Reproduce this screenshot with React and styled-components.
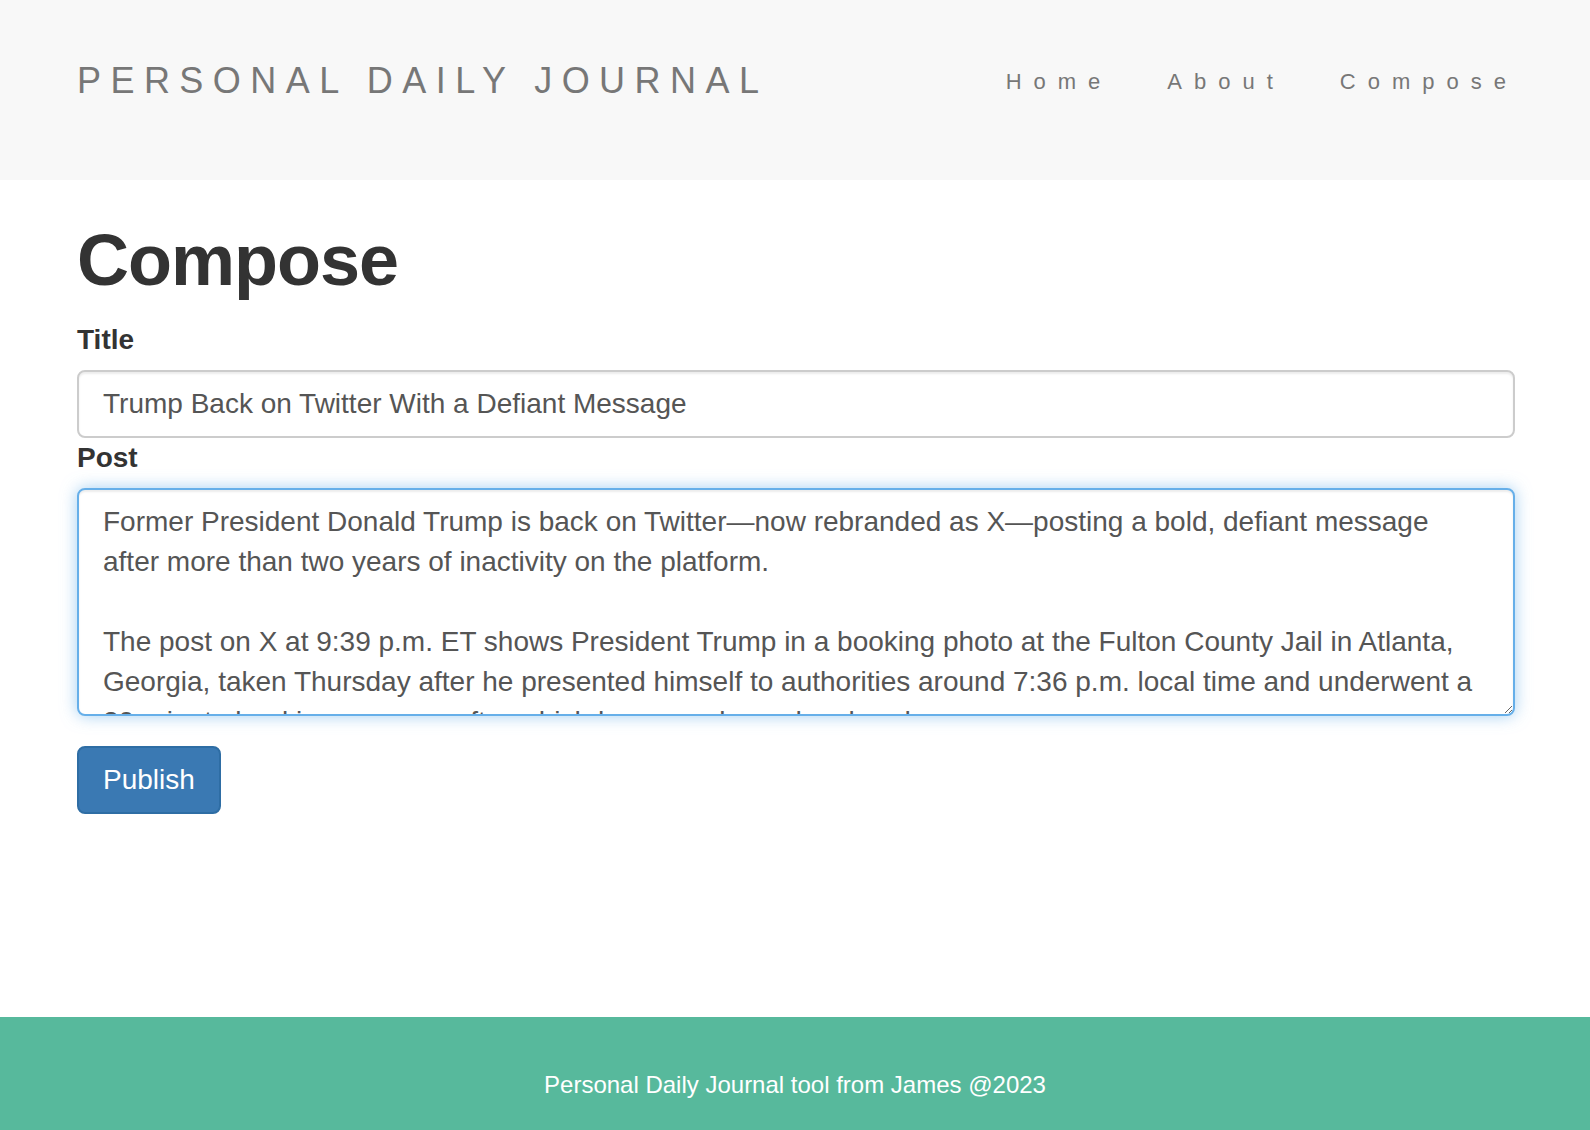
import React from 'react'
import styled, { createGlobalStyle } from 'styled-components'

const GlobalStyle = createGlobalStyle`
  html, body {
    margin: 0;
    padding: 0;
    background: #fff;
  }
  body {
    font-family: "Liberation Sans", Arial, Helvetica, sans-serif;
    color: #333;
  }
  * { box-sizing: border-box; }
`

const POST_TEXT = `Former President Donald Trump is back on Twitter\u2014now rebranded as X\u2014posting a bold, defiant message after more than two years of inactivity on the platform.

The post on X at 9:39 p.m. ET shows President Trump in a booking photo at the Fulton County Jail in Atlanta, Georgia, taken Thursday after he presented himself to authorities around 7:36 p.m. local time and underwent a 20-minute booking process, after which he was released on bond.`

const App = () => {
  return (
    <>
      <GlobalStyle />
      <Page>
        <Navbar>
          <Brand href="#">Personal Daily Journal</Brand>
          <NavList>
            <li><NavLink href="#">Home</NavLink></li>
            <li><NavLink href="#">About</NavLink></li>
            <li><NavLink href="#">Compose</NavLink></li>
          </NavList>
        </Navbar>

        <Main>
          <Heading>Compose</Heading>
          <form onSubmit={e => e.preventDefault()}>
            <Label htmlFor="postTitle">Title</Label>
            <TextInput id="postTitle" type="text" defaultValue="Trump Back on Twitter With a Defiant Message" />
            <Label htmlFor="postBody">Post</Label>
            <TextArea id="postBody" rows="5" defaultValue={POST_TEXT} />
            <PublishButton type="submit">Publish</PublishButton>
          </form>
        </Main>

        <Footer>Personal Daily Journal tool from James @2023</Footer>
      </Page>
    </>
  )
}

const Page = styled.div`
  min-height: 100vh;
  display: flex;
  flex-direction: column;
`

const Navbar = styled.header`
  height: 180px;
  background: #f8f8f8;
  display: flex;
  align-items: flex-start;
  justify-content: space-between;
  padding: 61px 75px 0 77px;
`

const Brand = styled.a`
  font-size: 36px;
  line-height: 40px;
  letter-spacing: 9.45px;
  text-transform: uppercase;
  color: #777;
  text-decoration: none;
`

const NavList = styled.ul`
  list-style: none;
  margin: 1px -3px 0 0;
  padding: 0;
  display: flex;
  gap: 55px;
`

const NavLink = styled.a`
  font-size: 22px;
  line-height: 40px;
  letter-spacing: 12px;
  color: #777;
  text-decoration: none;
`

const Main = styled.main`
  flex: 1;
  padding: 0 75px 0 77px;
`

const Heading = styled.h1`
  font-size: 72px;
  font-weight: 700;
  line-height: 79px;
  letter-spacing: -1px;
  color: #333;
  margin: 41px 0 20px;
`

const Label = styled.label`
  display: block;
  font-size: 28px;
  font-weight: 700;
  line-height: 40px;
  color: #333;
  margin-bottom: 10px;
`

const fieldBase = `
  display: block;
  width: 100%;
  font-family: "Liberation Sans", Arial, Helvetica, sans-serif;
  font-size: 28px;
  line-height: 40px;
  color: #555;
  background: #fff;
  border-radius: 8px;
  padding: 12px 24px;
  margin: 0;
  outline: none;
`

const TextInput = styled.input`
  ${fieldBase}
  height: 68px;
  border: 2px solid #ccc;
  box-shadow: inset 0 2px 2px rgba(0, 0, 0, 0.075);
`

const TextArea = styled.textarea`
  ${fieldBase}
  height: 228px;
  border: 2px solid #66afe9;
  box-shadow: inset 0 2px 2px rgba(0, 0, 0, 0.075), 0 0 16px rgba(102, 175, 233, 0.6);
  overflow: hidden;
  resize: vertical;
`

const PublishButton = styled.button`
  margin-top: 30px;
  font-family: "Liberation Sans", Arial, Helvetica, sans-serif;
  font-size: 28px;
  line-height: 40px;
  color: #fff;
  background: #3a79b3;
  border: 2px solid #2e6da4;
  border-radius: 8px;
  padding: 12px 24px;
  cursor: pointer;
`

const Footer = styled.footer`
  height: 113px;
  background: #57b99c;
  color: #fff;
  text-align: center;
  font-size: 24px;
  line-height: 34px;
  padding-top: 51px;
`

export default App
